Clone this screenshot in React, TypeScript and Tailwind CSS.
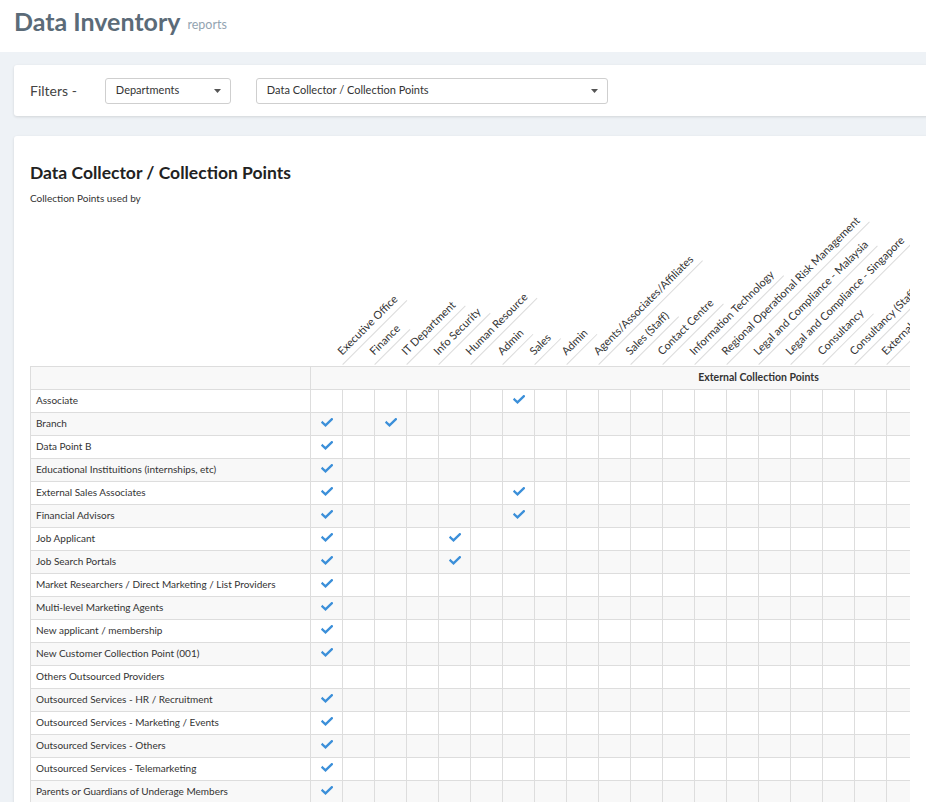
// Data Inventory — collection points report (department x collection point matrix).

const DEPARTMENTS: string[] = [
  "Executive Office",
  "Finance",
  "IT Department",
  "Info Security",
  "Human Resource",
  "Admin",
  "Sales",
  "Admin",
  "Agents/Associates/Affiliates",
  "Sales (Staff)",
  "Contact Centre",
  "Information Technology",
  "Regional Operational Risk Management",
  "Legal and Compliance - Malaysia",
  "Legal and Compliance - Singapore",
  "Consultancy",
  "Consultancy (Staff)",
  "External Vendors",
  "Marketing",
  "Customer Service",
  "Operations",
  "Procurement",
  "Legal",
  "Audit",
  "Risk",
  "Compliance",
  "Training",
  "Facilities",
];

/** Collection point rows; `checks` holds 1-based department column numbers. */
const ROWS: ReadonlyArray<{ label: string; checks: number[] }> = [
  { label: "Associate", checks: [7] },
  { label: "Branch", checks: [1, 3] },
  { label: "Data Point B", checks: [1] },
  { label: "Educational Instituitions (internships, etc)", checks: [1] },
  { label: "External Sales Associates", checks: [1, 7] },
  { label: "Financial Advisors", checks: [1, 7] },
  { label: "Job Applicant", checks: [1, 5] },
  { label: "Job Search Portals", checks: [1, 5] },
  { label: "Market Researchers / Direct Marketing / List Providers", checks: [1] },
  { label: "Multi-level Marketing Agents", checks: [1] },
  { label: "New applicant / membership", checks: [1] },
  { label: "New Customer Collection Point (001)", checks: [1] },
  { label: "Others Outsourced Providers", checks: [] },
  { label: "Outsourced Services - HR / Recruitment", checks: [1] },
  { label: "Outsourced Services - Marketing / Events", checks: [1] },
  { label: "Outsourced Services - Others", checks: [1] },
  { label: "Outsourced Services - Telemarketing", checks: [1] },
  { label: "Parents or Guardians of Underage Members", checks: [1] },
  { label: "Partners", checks: [1] },
  { label: "Public Events", checks: [1] },
];

function Caret() {
  return (
    <svg width="7" height="4" viewBox="0 0 7 4" className="shrink-0">
      <path d="M0 0 L7 0 L3.5 4 Z" fill="#555" />
    </svg>
  );
}

function Check() {
  return (
    <svg width="12" height="9" viewBox="0 0 12 9" className="mx-auto block">
      <path
        d="M1.5 4.5 L4.5 7.3 L10.8 1.2"
        fill="none"
        stroke="#3b8fd9"
        strokeWidth="2.3"
        strokeLinecap="square"
      />
    </svg>
  );
}

function Select({ label, width }: { label: string; width: string }) {
  return (
    <div
      className={`${width} flex h-[26px] items-center justify-between rounded-[3px] border border-[#cfcfcf] bg-white pl-[10px] pr-[9px] text-[11px] text-[#333]`}
    >
      <span>{label}</span>
      <Caret />
    </div>
  );
}

export default function App() {
  return (
    <div
      className="min-h-screen overflow-hidden bg-[#eef2f6] text-[#333]"
      style={{ fontFamily: "Lato, 'Noto Sans', sans-serif" }}
    >
      <header className="flex h-[52px] items-center bg-white px-[14px] pb-[10px]">
        <h1 className="text-[25px] font-bold leading-none text-[#5b6b78]">Data Inventory</h1>
        <span className="ml-[7px] mt-[8px] text-[12.5px] text-[#93a4b1]">reports</span>
      </header>

      <div className="pl-[14px] pt-[13px]">
        <section className="flex h-[51px] w-[940px] items-center rounded-[3px] bg-white pl-[16px] shadow-[0_1px_3px_rgba(0,0,0,0.12)]">
          <span className="mr-[28px] text-[14px] text-[#444]">Filters -</span>
          <Select label="Departments" width="w-[126px]" />
          <div className="w-[25px]" />
          <Select label="Data Collector / Collection Points" width="w-[352px]" />
        </section>

        <section className="mt-[20px] w-[940px] rounded-[3px] bg-white pl-[16px] pt-[25px] shadow-[0_1px_3px_rgba(0,0,0,0.12)]">
          <h2 className="text-[17.5px] font-bold leading-[24px] text-[#222]">
            Data Collector / Collection Points
          </h2>
          <p className="mt-[6px] text-[10px] leading-[14px] text-[#333]">Collection Points used by</p>

          <div className="w-[880px] overflow-hidden">
            <table className="table-fixed border-collapse" style={{ width: 280 + DEPARTMENTS.length * 32 }}>
              <colgroup>
                <col className="w-[280px]" />
                {DEPARTMENTS.map((_, i) => (
                  <col key={i} className="w-[32px]" />
                ))}
              </colgroup>
              <thead>
                <tr className="h-[161px]">
                  <th />
                  {DEPARTMENTS.map((name, i) => (
                    <th key={i} className="relative p-0">
                      <div className="absolute bottom-[1px] left-[32px] origin-bottom-left -rotate-45">
                        <span className="block whitespace-nowrap border-b border-[#dcdcdc] px-[6px] pb-[4px] text-left text-[11px] font-normal leading-[13px] text-[#333]">
                          {name}
                        </span>
                      </div>
                    </th>
                  ))}
                </tr>
                <tr className="h-[23px] bg-[#f8f8f8]">
                  <th className="border border-[#dddddd]" />
                  <th
                    colSpan={DEPARTMENTS.length}
                    className="border border-[#dddddd] text-center text-[10.5px] font-bold text-[#333]"
                  >
                    External Collection Points
                  </th>
                </tr>
              </thead>
              <tbody>
                {ROWS.map((row, r) => (
                  <tr key={row.label} className={`h-[23px] ${r % 2 === 1 ? "bg-[#f8f8f8]" : "bg-white"}`}>
                    <td className="whitespace-nowrap border border-[#dddddd] px-[5px] text-[10px] text-[#333]">
                      {row.label}
                    </td>
                    {DEPARTMENTS.map((_, c) => (
                      <td key={c} className="border border-[#dddddd] p-0 pb-[2px]">
                        {row.checks.includes(c + 1) ? <Check /> : null}
                      </td>
                    ))}
                  </tr>
                ))}
              </tbody>
            </table>
          </div>
        </section>
      </div>
    </div>
  );
}
